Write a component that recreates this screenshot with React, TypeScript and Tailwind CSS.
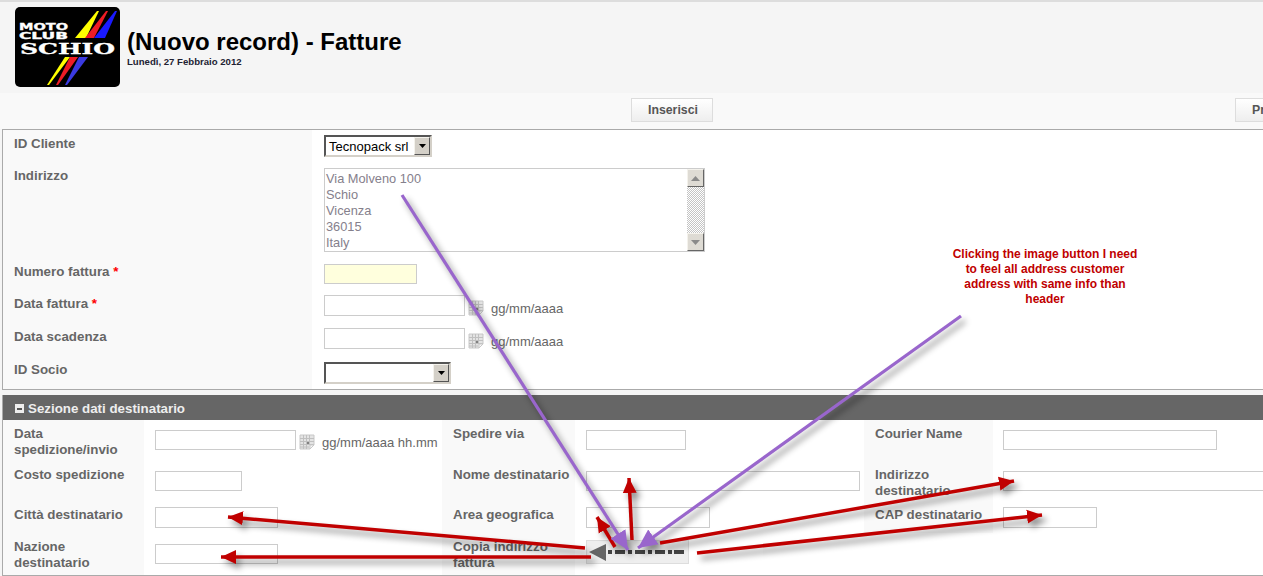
// Invoice form screenshot with the red and purple annotations painted on top
const labelCls = "bg-[#f9f9f9] pl-[11px] pt-[6px] text-[13.33px] leading-[16px] font-bold text-[#666666]"
const inputCls = "border border-[#cccccc] bg-white"

function Star() {
  return <span className="text-[#ff0000]"> *</span>
}

function CalendarIcon() {
  return (
    <svg width="16" height="16" viewBox="0 0 16 16" className="shrink-0">
      <path d="M1 1h14v10l-4 4H1z" fill="#e4e4e4" stroke="#c8c8c8" />
      <path d="M1 4.500h14M1 7.500h14M1 10.500h14M1 13h9M4.500 1v14M7.500 1v14M10.500 1v10" stroke="#c0c0c0" fill="none" />
      <rect x="8" y="8" width="2" height="2" fill="#808080" />
      <path d="M11 15v-4h4z" fill="#f8f8f8" stroke="#c8c8c8" />
    </svg>
  )
}

function DateField({ width, hint, height = "h-[21px]" }: { width: string; hint: string; height?: string }) {
  return (
    <div className="mb-[2px] flex items-center">
      <div className={`${inputCls} ${width} ${height}`} />
      <div className="mt-[4px] ml-[3px] flex items-center">
        <CalendarIcon />
        <span className="mt-[2px] ml-[7px] text-[13px] whitespace-nowrap text-[#666666]">{hint}</span>
      </div>
    </div>
  )
}

function OldSelect({ width, children }: { width: string; children?: React.ReactNode }) {
  return (
    <div className={`${width} flex h-[22px] border-2 border-t-[#555555] border-l-[#555555] border-r-[#d4d0c8] border-b-[#d4d0c8] bg-white`}>
      <span className="flex-1 pl-[3px] text-[13px] leading-[20px] whitespace-nowrap text-black">{children}</span>
      <div className="flex w-[16px] items-center justify-center border border-t-[#f4f2ec] border-l-[#f4f2ec] border-r-[#555555] border-b-[#555555] bg-[#d4d0c8]">
        <svg width="7" height="4" viewBox="0 0 7 4">
          <path d="M0 0h7L3.500 4z" fill="#000000" />
        </svg>
      </div>
    </div>
  )
}

function ScrollArrow({ up }: { up?: boolean }) {
  return (
    <div className="flex h-[18px] items-center justify-center border border-t-[#f4f2ec] border-l-[#f4f2ec] border-r-[#666666] border-b-[#666666] bg-[#dedbd4]">
      <svg width="9" height="5" viewBox="0 0 9 5">
        <path d={up ? "M0 5h9L4.500 0z" : "M0 0h9L4.500 5z"} fill="#8a8a8a" />
      </svg>
    </div>
  )
}

function AddressBox() {
  return (
    <div className="flex h-[84px] w-[381px] border border-[#cccccc] bg-white">
      <div className="flex-1 pt-[2px] pl-[1px] text-[12.800px] leading-[16px] text-[#85808c]">
        <div>Via Molveno 100</div>
        <div>Schio</div>
        <div>Vicenza</div>
        <div>36015</div>
        <div>Italy</div>
      </div>
      <div className="flex w-[17px] flex-col">
        <ScrollArrow up />
        <div className="flex-1 bg-[repeating-conic-gradient(#c4c4c4_0_25%,#ffffff_0_50%)] bg-[length:2px_2px]" />
        <ScrollArrow />
      </div>
    </div>
  )
}

function Logo() {
  return (
    <svg width="105" height="80" viewBox="0 0 105 80" className="shrink-0">
      <rect width="105" height="80" rx="5" fill="#000000" />
      <path d="M82 4 60 31h11L84 4z" fill="#ffff00" />
      <path d="M91 4 70 31h9L93 4z" fill="#ee1c25" />
      <path d="M100 4 79 31h11L102 4z" fill="#1a1aff" />
      <path d="M32 78 50 50h5L34 78z" fill="#ffff00" />
      <path d="M41 78 55 50h8L43 78z" fill="#ee1c25" />
      <path d="M50 78 64 50h9L52 78z" fill="#3a3ae0" />
      <g fill="#ffffff" stroke="#ffffff" strokeWidth="0.300" fontFamily="'DejaVu Sans', sans-serif" fontWeight="700">
        <text x="4" y="22.500" fontSize="8.200" textLength="49" lengthAdjust="spacingAndGlyphs">MOTO</text>
        <text x="4" y="31.500" fontSize="8.200" textLength="49" lengthAdjust="spacingAndGlyphs">CLUB</text>
      </g>
      <text x="5" y="46.500" fill="#ffffff" stroke="#ffffff" strokeWidth="0.300" fontFamily="'DejaVu Serif', serif" fontWeight="700" fontSize="15" textLength="95" lengthAdjust="spacingAndGlyphs">SCHIO</text>
    </svg>
  )
}

function CopyButton() {
  return (
    <div className="mb-[4px] flex h-[24px] w-[103px] items-center border border-[#dddddd] bg-[#eeeeee]">
      <svg width="101" height="22" viewBox="0 0 101 22">
        <path d="M2 11 19 3v17z" fill="#666666" />
        <g fill="#444444">
          <rect x="21" y="9" width="4" height="4" />
          <rect x="28" y="9" width="10" height="4" />
          <rect x="41" y="9" width="4" height="4" />
          <rect x="48" y="9" width="10" height="4" />
          <rect x="61" y="9" width="4" height="4" />
          <rect x="68" y="9" width="10" height="4" />
          <rect x="81" y="9" width="4" height="4" />
          <rect x="87" y="9" width="10" height="4" />
        </g>
      </svg>
    </div>
  )
}

function ToolButton({ children, className }: { children: React.ReactNode; className?: string }) {
  return (
    <div className={`flex h-[24px] items-center border border-[#dddddd] bg-gradient-to-b from-white to-[#eeeeee] px-[16px] text-[12.300px] font-bold text-[#555555] ${className ?? ""}`}>
      {children}
    </div>
  )
}

// Annotation lines: x1,y1 -> tip x2,y2
const redArrows = [
  [585, 548, 228, 517],
  [591, 557, 221, 557],
  [615, 547, 597, 517],
  [632, 540, 629, 478],
  [660, 543, 1014, 481],
  [697, 553, 1042, 515],
]
const purpleArrows = [
  [402, 195, 628, 550],
  [961, 316, 638, 548],
]

function Annotations() {
  return (
    <div className="absolute inset-0">
      <svg width="1263" height="576" viewBox="0 0 1263 576" className="drop-shadow-[4px_5px_3px_rgba(0,0,0,0.45)]">
        <defs>
          <marker id="redHead" markerUnits="userSpaceOnUse" markerWidth="16" markerHeight="16" refX="15" refY="8" orient="auto">
            <path d="M0 1 15 8 0 15z" fill="#c00000" />
          </marker>
          <marker id="purpleHead" markerUnits="userSpaceOnUse" markerWidth="20" markerHeight="20" refX="19" refY="10" orient="auto">
            <path d="M0 1 19 10 0 19z" fill="#9966cc" />
          </marker>
        </defs>
        {redArrows.map(([x1, y1, x2, y2]) => (
          <line key={`${x1}-${y1}`} x1={x1} y1={y1} x2={x2} y2={y2} stroke="#c00000" strokeWidth="3.500" markerEnd="url(#redHead)" />
        ))}
        {purpleArrows.map(([x1, y1, x2, y2]) => (
          <line key={`${x1}-${y1}`} x1={x1} y1={y1} x2={x2} y2={y2} stroke="#9966cc" strokeWidth="3.200" markerEnd="url(#purpleHead)" />
        ))}
      </svg>
      <div className="absolute top-[247px] left-[952px] w-[186px] text-center text-[12px] leading-[15px] font-bold text-[#c00000]">
        Clicking the image button I need to feel all address customer address with same info than header
      </div>
    </div>
  )
}

export default function App() {
  return (
    <div className="relative h-[576px] w-[1263px] overflow-hidden bg-[#f5f5f5] font-['Liberation_Sans',Arial,sans-serif]">
      <div className="w-[1500px]">
        {/* Header */}
        <div className="flex h-[93px] border-t-2 border-[#dddddd] pt-[5px] pl-[15px]">
          <div>
            <Logo />
          </div>
          <div className="ml-[7px] pt-[18px]">
            <h1 className="text-[24px] leading-[34px] font-bold text-black">(Nuovo record) - Fatture</h1>
            <p className="-mt-[2px] text-[9.600px] leading-[10px] font-bold text-[#222233]">Lunedì, 27 Febbraio 2012</p>
          </div>
        </div>

        {/* Toolbar */}
        <div className="flex h-[36px] items-start bg-[#f9f9f9] pt-[5px] pl-[631px]">
          <ToolButton className="w-[82px]">Inserisci</ToolButton>
          <ToolButton className="ml-[522px]">Precedente</ToolButton>
        </div>

        {/* Main fields */}
        <div className="ml-[2px] grid grid-cols-[309px_1fr] grid-rows-[32px_96px_32px_33px_33px_33px] border border-[#aaaaaa] bg-white">
          <div className={labelCls}>ID Cliente</div>
          <div className="flex items-center pl-[12px]">
            <OldSelect width="w-[108px]">Tecnopack srl</OldSelect>
          </div>
          <div className={labelCls}>Indirizzo</div>
          <div className="flex items-center pl-[12px]">
            <AddressBox />
          </div>
          <div className={labelCls}>
            Numero fattura<Star />
          </div>
          <div className="flex items-center pl-[12px]">
            <div className="h-[20px] w-[93px] border border-[#cccccc] bg-[#ffffdd]" />
          </div>
          <div className={labelCls}>
            Data fattura<Star />
          </div>
          <div className="flex items-center pl-[12px]">
            <DateField width="w-[141px]" hint="gg/mm/aaaa" />
          </div>
          <div className={labelCls}>Data scadenza</div>
          <div className="flex items-center pl-[12px]">
            <DateField width="w-[141px]" hint="gg/mm/aaaa" />
          </div>
          <div className={labelCls}>ID Socio</div>
          <div className="flex items-center pl-[12px]">
            <OldSelect width="w-[127px]" />
          </div>
        </div>

        {/* Recipient section */}
        <div className="mt-[5px] ml-[2px] border-x border-b border-[#aaaaaa] bg-white">
          <div className="flex h-[25px] items-center bg-[#666666] pt-[2px] pl-[12px] text-[13.33px] font-bold text-[#eeeeee]">
            <span className="mr-[4px] flex h-[9px] w-[9px] items-center justify-center bg-[#eeeeee]">
              <span className="h-[2px] w-[5px] bg-[#555555]" />
            </span>
            Sezione dati destinatario
          </div>
          <div className="grid grid-cols-[141px_298px_133px_289px_129px_1fr] grid-rows-[41px_40px_32px_42px]">
            <div className={labelCls}>Data spedizione/invio</div>
            <div className="flex items-center pl-[11px]">
              <DateField width="w-[141px]" hint="gg/mm/aaaa hh.mm" height="h-[20px]" />
            </div>
            <div className={labelCls}>Spedire via</div>
            <div className="flex items-center pl-[11px]">
              <div className={`${inputCls} mb-[1px] h-[20px] w-[100px]`} />
            </div>
            <div className={labelCls}>Courier Name</div>
            <div className="flex items-center pl-[10px]">
              <div className={`${inputCls} mb-[1px] h-[20px] w-[214px]`} />
            </div>

            <div className={labelCls}>Costo spedizione</div>
            <div className="flex items-center pl-[11px]">
              <div className={`${inputCls} h-[20px] w-[87px]`} />
            </div>
            <div className={labelCls}>Nome destinatario</div>
            <div className="flex items-center pl-[11px]">
              <div className={`${inputCls} h-[20px] w-[274px]`} />
            </div>
            <div className={labelCls}>Indirizzo destinatario</div>
            <div className="flex items-center pl-[10px]">
              <div className={`${inputCls} h-[20px] w-[400px]`} />
            </div>

            <div className={labelCls}>Città destinatario</div>
            <div className="flex items-center pl-[11px]">
              <div className={`${inputCls} h-[21px] w-[123px]`} />
            </div>
            <div className={labelCls}>Area geografica</div>
            <div className="flex items-center pl-[11px]">
              <div className={`${inputCls} h-[21px] w-[124px]`} />
            </div>
            <div className={labelCls}>CAP destinatario</div>
            <div className="flex items-center pl-[10px]">
              <div className={`${inputCls} h-[21px] w-[94px]`} />
            </div>

            <div className={labelCls}>Nazione destinatario</div>
            <div className="flex items-center pl-[11px]">
              <div className={`${inputCls} h-[20px] w-[123px]`} />
            </div>
            <div className={labelCls}>Copia indirizzo fattura</div>
            <div className="flex items-center pl-[11px]">
              <CopyButton />
            </div>
            <div className="col-span-2" />
          </div>
        </div>
      </div>

      <Annotations />
    </div>
  )
}
